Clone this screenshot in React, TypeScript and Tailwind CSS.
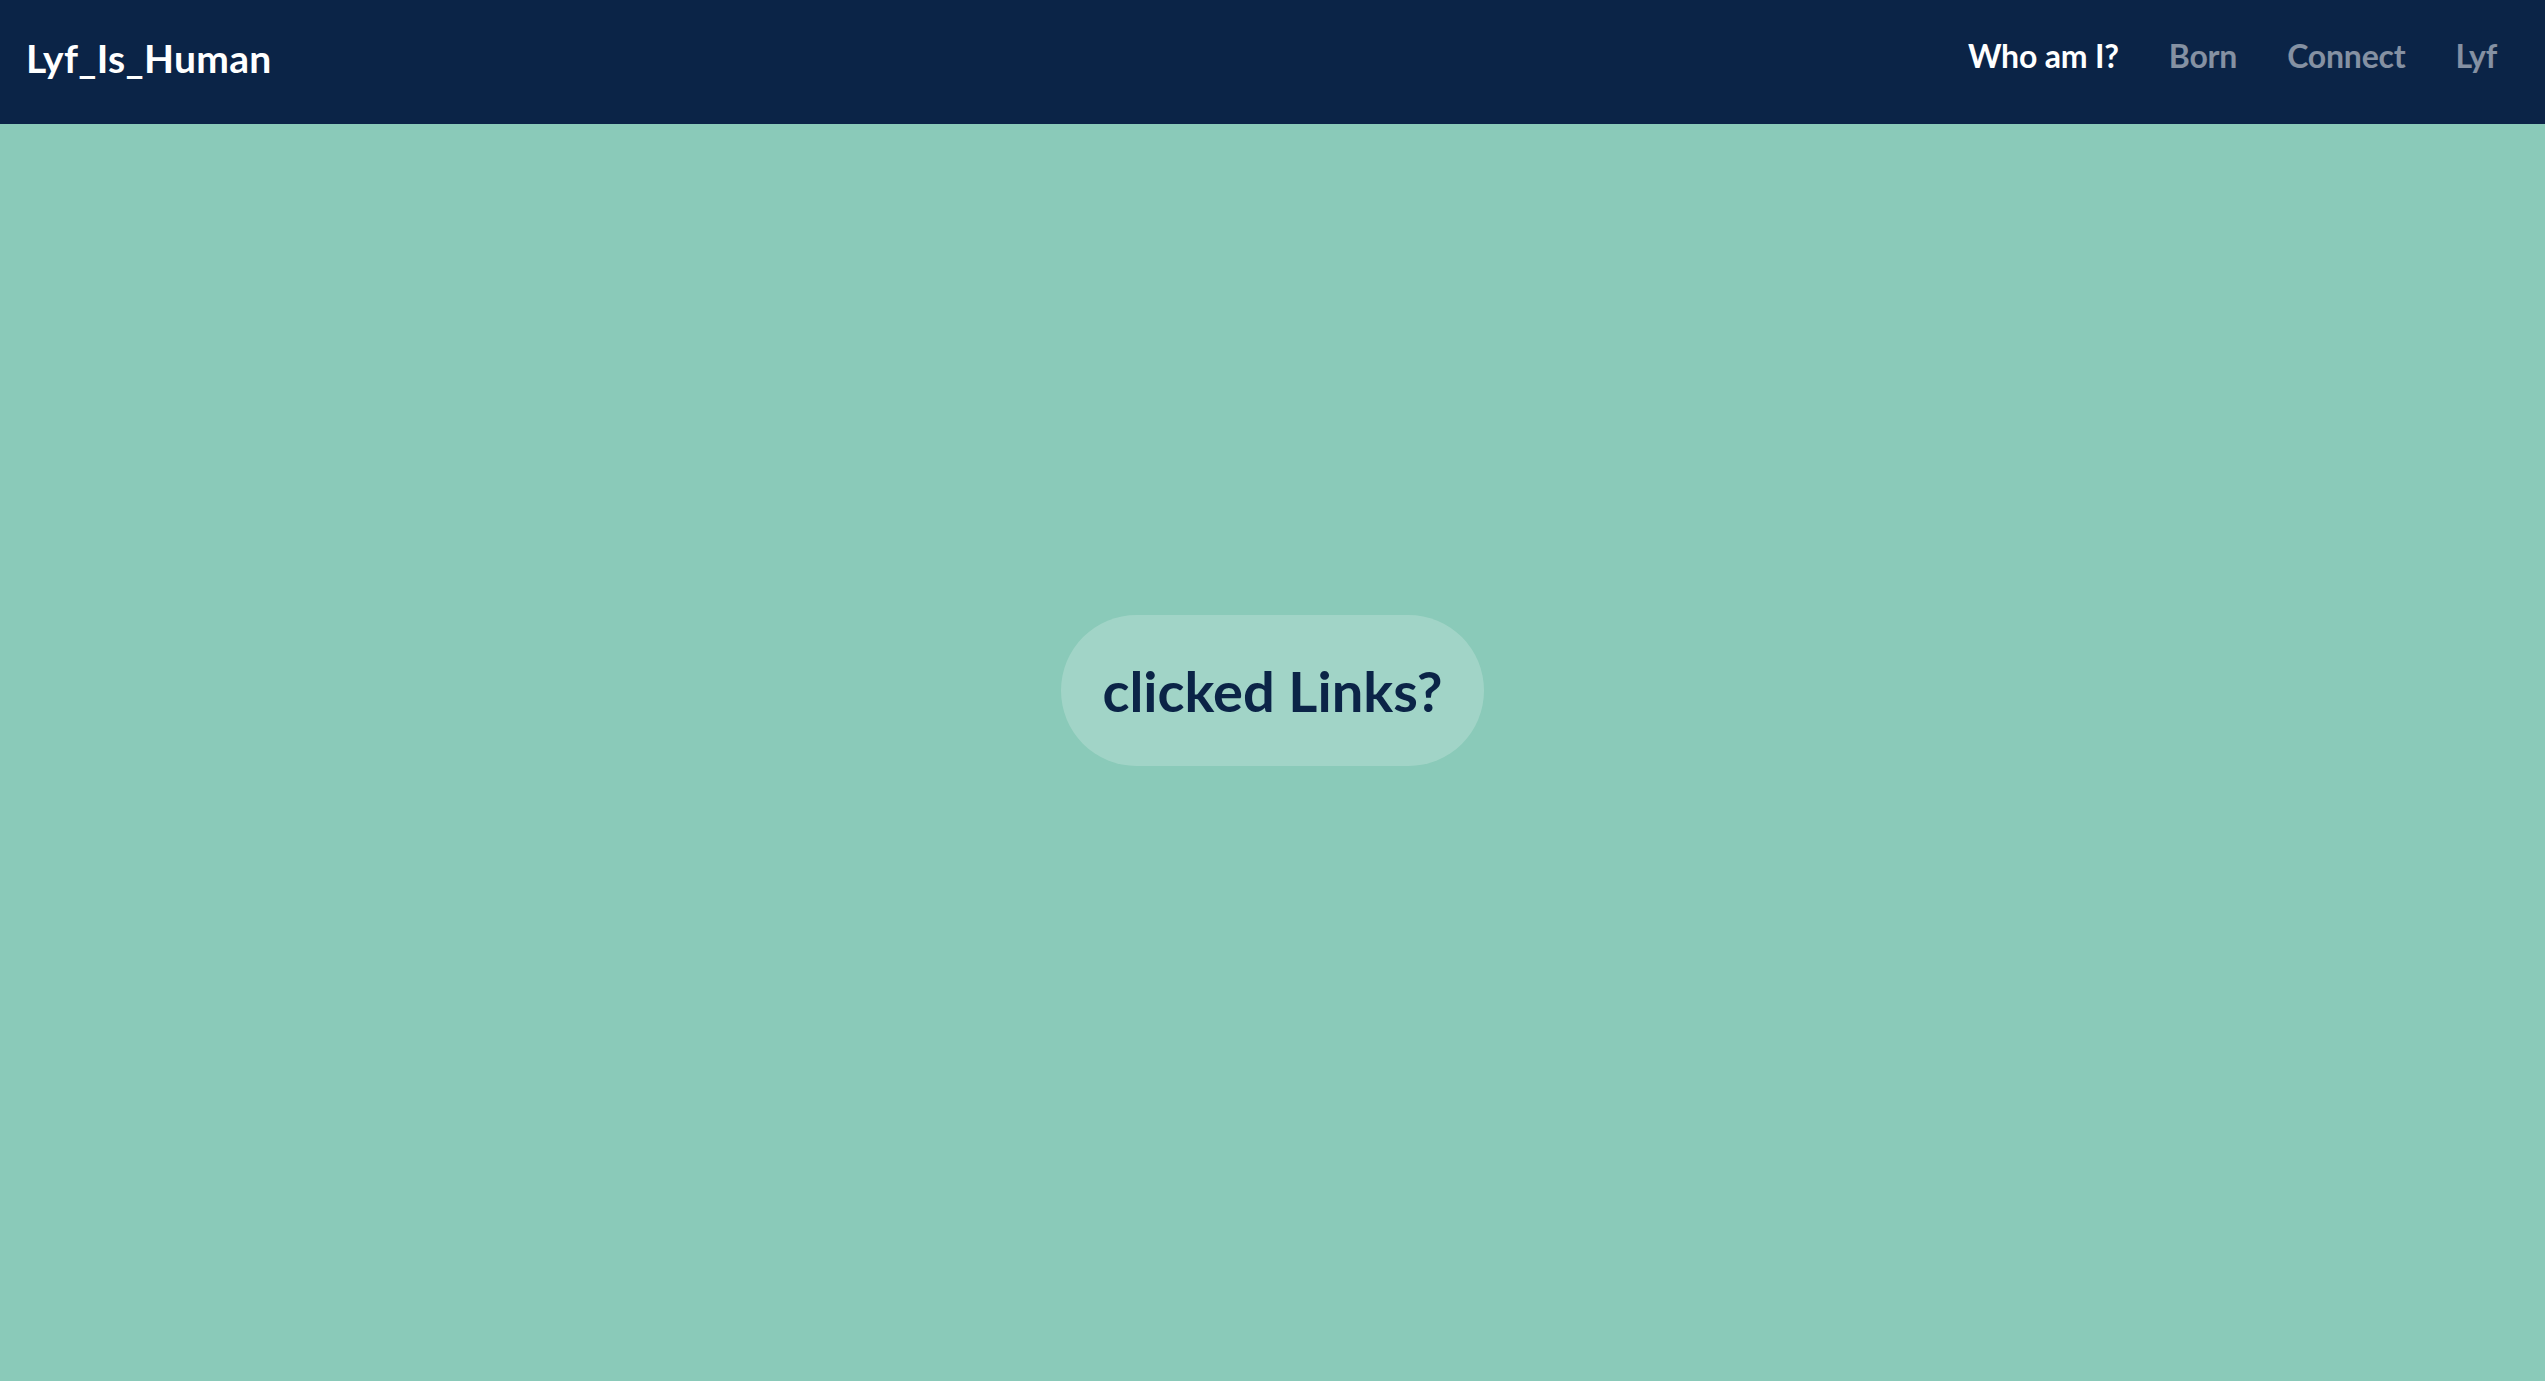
const NAV_LINKS = [
  { label: "Who am I?", active: true },
  { label: "Born", active: false },
  { label: "Connect", active: false },
  { label: "Lyf", active: false },
];

const App = () => {
  return (
    <div className="relative w-full h-[1381px] bg-[#8acab9] font-['Lato',sans-serif] overflow-hidden">
      <nav className="absolute top-0 left-0 right-0 h-[124px] bg-[#0b2447] flex items-center justify-between pl-[26px] pr-[48px] z-10">
        <span className="text-white font-bold text-[39px] leading-none tracking-[0.3px] mb-[8px]">
          Lyf_Is_Human
        </span>
        <div className="flex items-center gap-[50px] mb-[13px]">
          {NAV_LINKS.map((item) => (
            <a
              key={item.label}
              href="#"
              className={
                item.active
                  ? "text-white font-bold text-[32px] leading-none tracking-[-0.2px]"
                  : "text-white/50 font-bold text-[32px] leading-none tracking-[-0.2px]"
              }
            >
              {item.label}
            </a>
          ))}
        </div>
      </nav>
      <main className="w-full h-full flex items-center justify-center">
        <div className="h-[151px] px-[41px] rounded-full bg-white/20 flex items-center">
          <span className="text-[#0b2447] font-bold text-[56px] leading-none">
            clicked Links?
          </span>
        </div>
      </main>
    </div>
  );
};

export default App;
